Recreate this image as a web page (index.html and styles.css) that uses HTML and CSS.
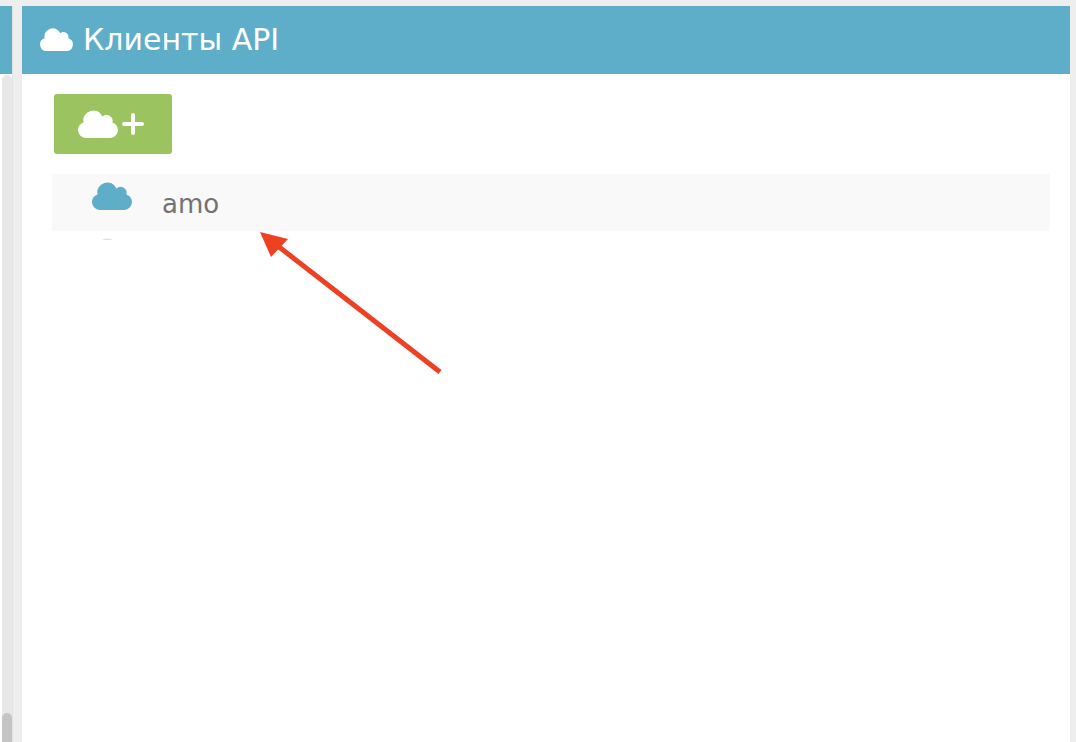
FILE: index.html
```html
<!DOCTYPE html>
<html lang="ru">
<head>
<meta charset="utf-8">
<title>Клиенты API</title>
<link rel="stylesheet" href="styles.css">
</head>
<body>
<svg width="0" height="0" class="defs" aria-hidden="true">
  <symbol id="cloud" viewBox="0 0 40 28">
    <path d="M8 28A8 8 0 0 1 5.500 12.400A10 10 0 0 1 24.500 6.500A6 6 0 0 1 34.400 12.400A8 8 0 0 1 32 28Z"/>
  </symbol>
</svg>
<div class="page">
  <aside class="side">
    <div class="side-head"></div>
    <div class="track"><div class="thumb"></div></div>
  </aside>
  <main class="panel">
    <header class="head">
      <svg class="head-icon"><use href="#cloud"/></svg>
      <h1 class="title">Клиенты API</h1>
    </header>
    <div class="body">
      <button class="add" type="button">
        <svg class="add-icon"><use href="#cloud"/></svg>
        <svg class="add-plus" viewBox="0 0 22 22"><path d="M11 2V20M2 11H20"/></svg>
      </button>
      <div class="row">
        <svg class="row-icon"><use href="#cloud"/></svg>
        <span class="row-name">amo</span>
      </div>
      <div class="clip"><svg class="row-icon"><use href="#cloud"/></svg></div>
    </div>
  </main>
</div>
<svg class="arrow" viewBox="0 0 1076 742" aria-hidden="true">
  <path class="arrow-line" d="M440 372L274 243"/>
  <path class="arrow-tip" d="M260 232L288 239L271 257Z"/>
</svg>
</body>
</html>
```
FILE: styles.css
```css
html, body {
  margin: 0;
  height: 100%;
  overflow: hidden;
  background: #eeeeee;
}
body {
  font-family: "DejaVu Sans", sans-serif;
}
.defs {
  position: absolute;
}
.page {
  display: flex;
  height: 736px;
  padding-top: 6px;
  gap: 10px;
}
.side {
  width: 12px;
  display: flex;
  flex-direction: column;
  background: #ffffff;
  border-right: 1px solid #e2e2e2;
  box-sizing: content-box;
}
.side-head {
  height: 68px;
  flex: none;
  background: #5eaec9;
}
.track {
  flex: 1;
  margin-left: 2px;
  margin-top: 1px;
  background: #e8e8e8;
  border-radius: 5px 5px 0 0;
  display: flex;
  flex-direction: column;
  justify-content: flex-end;
}
.thumb {
  height: 29px;
  background: #c4c4c4;
  border-radius: 5px 5px 0 0;
}
.panel {
  width: 1048px;
  margin-left: -1px;
  background: #ffffff;
  display: flex;
  flex-direction: column;
}
.head {
  height: 68px;
  flex: none;
  background: #5eaec9;
  display: flex;
  align-items: center;
  padding-left: 18px;
  color: #ffffff;
}
.head-icon {
  width: 33px;
  height: 23px;
  fill: #ffffff;
  margin-top: -2px;
}
.title {
  margin: 0 0 0 10px;
  font-size: 30px;
  font-weight: 400;
  line-height: 34px;
}
.body {
  padding: 20px 20px 0 30px;
}
.add {
  display: flex;
  align-items: center;
  width: 118px;
  height: 60px;
  margin: 0 0 20px 2px;
  padding: 0 0 0 24px;
  border: 0;
  border-radius: 3px;
  background: #9bc35f;
}
.add-icon {
  width: 40px;
  height: 28px;
  fill: #ffffff;
}
.add-plus {
  width: 22px;
  height: 22px;
  margin-left: 4px;
  margin-top: -1px;
  fill: none;
  stroke: #ffffff;
  stroke-width: 4;
  stroke-linecap: round;
}
.row {
  height: 57px;
  background: #f9f9f9;
  display: flex;
  align-items: center;
  padding-left: 40px;
  color: #727272;
}
.row-icon {
  width: 40px;
  height: 28px;
  fill: #5eaec9;
  flex: none;
}
.row .row-icon {
  margin-top: -14px;
}
.row-name {
  margin-left: 30px;
  margin-top: 2px;
  font-size: 26px;
  line-height: 30px;
}
.clip {
  height: 9px;
  overflow: hidden;
  padding: 7px 0 0 40px;
  box-sizing: border-box;
  opacity: 0.3;
}
.arrow {
  position: absolute;
  left: 0;
  top: 0;
  width: 1076px;
  height: 742px;
  pointer-events: none;
}
.arrow-line {
  fill: none;
  stroke: #ee4023;
  stroke-width: 5;
}
.arrow-tip {
  fill: #ee4023;
}
```
